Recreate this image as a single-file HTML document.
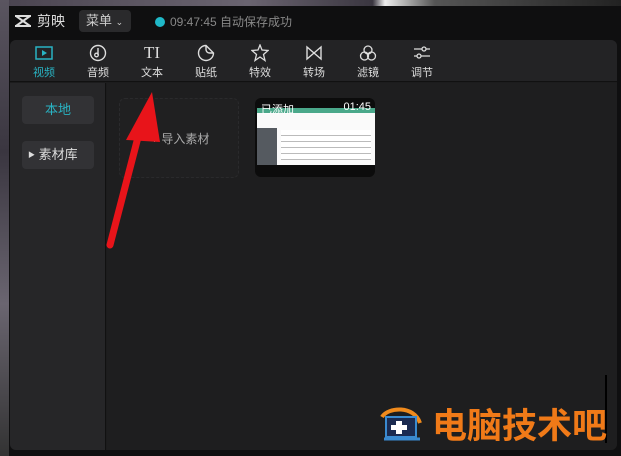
<!DOCTYPE html>
<html><head><meta charset="utf-8"><style>
*{margin:0;padding:0;box-sizing:border-box}
body{width:621px;height:456px;overflow:hidden;background:#3a3640;font-family:"Liberation Sans","Noto Sans CJK SC",sans-serif;position:relative}
.top{position:absolute;left:0;top:4px;width:621px;height:452px;background:#0f0f10}
.topbg{position:absolute;left:0;top:0;width:621px;height:6px;background:linear-gradient(90deg,#4a4450,#6a6470 40%,#3a3640 60%,#eee 62%,#555 70%,#222)}
.leftbg{position:absolute;left:0;top:0;width:9px;height:456px;background:linear-gradient(#5a5560,#3a3640,#6a6570,#333)}
.win{position:absolute;left:10px;top:40px;width:607px;height:410px;background:#1c1c1d;border-radius:6px;overflow:hidden}
.tb{position:absolute;left:0;top:0;width:607px;height:42px;background:#232325;border-bottom:1px solid #111}
.side{position:absolute;left:0;top:43px;width:96px;height:367px;background:#262628;border-right:1px solid #111}
.main{position:absolute;left:97px;top:43px;width:510px;height:367px;background:#1e1e1f}
.it{position:absolute;top:4px;width:40px;text-align:center;color:#ddd;font-size:11px}
.it svg{display:block;margin:0 auto 2px;width:18px;height:18px}
.btn{position:absolute;left:12px;width:72px;height:28px;background:#323235;border-radius:4px;font-size:13px;line-height:28px}
</style></head><body>
<div class="top"></div><div class="topbg"></div><div class="leftbg"></div>
<svg style="position:absolute;left:13px;top:13px" width="20" height="16" viewBox="0 0 20 16"><path d="M2 3h16M2 13h16M3 3l14 10M17 3L3 13" stroke="#ddd" stroke-width="2" fill="none"/></svg>
<div style="position:absolute;left:37px;top:11px;color:#ddd;font-size:14px">剪映</div>
<div style="position:absolute;left:79px;top:10px;width:52px;height:22px;background:#2a2a2c;border-radius:4px;color:#ccc;font-size:13px;line-height:22px;padding-left:7px">菜单 <span style="font-size:9px">⌄</span></div>
<div style="position:absolute;left:155px;top:17px;width:10px;height:10px;border-radius:50%;background:#1fb8c8"></div>
<div style="position:absolute;left:170px;top:13px;color:#888;font-size:12px">09:47:45 自动保存成功</div>
<div class="win">
<div class="tb">
<div class="it" style="left:14px;color:#29b3c3"><svg viewBox="0 0 18 18"><rect x="1" y="3" width="16" height="12" fill="none" stroke="#29b3c3" stroke-width="1.5"/><path d="M7 6v6l5-3z" fill="#29b3c3"/></svg>视频</div>
<div class="it" style="left:68px"><svg viewBox="0 0 18 18"><circle cx="9" cy="9" r="7.5" fill="none" stroke="#ddd" stroke-width="1.4"/><path d="M9 4v7" stroke="#ddd" stroke-width="1.4"/><circle cx="7.5" cy="11" r="1.8" fill="none" stroke="#ddd" stroke-width="1.3"/></svg>音频</div>
<div class="it" style="left:122px"><div style="font-family:'Liberation Serif',serif;font-size:17px;line-height:18px;height:20px">TI</div>文本</div>
<div class="it" style="left:176px"><svg viewBox="0 0 18 18"><path d="M9 1.5a7.5 7.5 0 1 0 7.5 7.5L9 1.5z M9 1.5v4a3.5 3.5 0 0 0 3.5 3.5h4" fill="none" stroke="#ddd" stroke-width="1.4"/></svg>贴纸</div>
<div class="it" style="left:230px"><svg viewBox="0 0 18 18"><path d="M9 1l2 5 6 .5-4.5 4 1.5 6L9 13l-5 3.5 1.5-6L1 6.5 7 6z" fill="none" stroke="#ddd" stroke-width="1.3"/></svg>特效</div>
<div class="it" style="left:284px"><svg viewBox="0 0 18 18"><path d="M2 3v12l14-12v12z" fill="none" stroke="#ddd" stroke-width="1.4"/></svg>转场</div>
<div class="it" style="left:338px"><svg viewBox="0 0 18 18"><circle cx="9" cy="6" r="4" fill="none" stroke="#ddd" stroke-width="1.3"/><circle cx="5.5" cy="12" r="4" fill="none" stroke="#ddd" stroke-width="1.3"/><circle cx="12.5" cy="12" r="4" fill="none" stroke="#ddd" stroke-width="1.3"/></svg>滤镜</div>
<div class="it" style="left:392px"><svg viewBox="0 0 18 18"><path d="M1 5h16M1 12h16" stroke="#ddd" stroke-width="1.3"/><circle cx="11" cy="5" r="2" fill="#232325" stroke="#ddd" stroke-width="1.3"/><circle cx="6" cy="12" r="2" fill="#232325" stroke="#ddd" stroke-width="1.3"/></svg>调节</div>
</div>
<div class="side">
<div class="btn" style="top:13px;color:#29b3c3;text-align:center">本地</div>
<div class="btn" style="top:58px;color:#ddd;padding-left:6px"><span style="font-size:7px;vertical-align:2px">▶</span> 素材库</div>
</div>
<div class="main">
<div style="position:absolute;left:12px;top:15px;width:120px;height:80px;border:1px dashed #2a2a2c;border-radius:6px;background:#202021"></div>
<div style="position:absolute;left:44px;top:47px;color:#aaa;font-size:12px">+ 导入素材</div>
<div style="position:absolute;left:148px;top:15px;width:120px;height:79px;background:#0c0c0c;border-radius:6px;overflow:hidden">
<div style="position:absolute;left:2px;top:13px;width:118px;height:54px;background:#fafafa"></div>
<div style="position:absolute;left:2px;top:10px;width:118px;height:5px;background:#4aa88a"></div>
<div style="position:absolute;left:2px;top:30px;width:20px;height:37px;background:#555a60"></div>
<div style="position:absolute;left:26px;top:32px;width:90px;height:30px;background:repeating-linear-gradient(#fff 0 5px,#bbb 5px 6px)"></div>
<div style="position:absolute;left:6px;top:3px;color:#fff;font-size:11px">已添加</div>
<div style="position:absolute;right:4px;top:3px;color:#fff;font-size:11px">01:45</div>
</div>
</div>
</div>
<svg style="position:absolute;left:0;top:0" width="621" height="456"><path d="M110 245L143 118" stroke="#e8141a" stroke-width="7" stroke-linecap="round"/><path d="M152 92L126 140 160 142z" fill="#e8141a"/><path d="M606 375v68" stroke="#000" stroke-width="2"/></svg>
<svg style="position:absolute;left:378px;top:405px" width="50" height="40" viewBox="0 0 50 40"><path d="M4 12C10 2 36 0 42 18" stroke="#f08a1c" stroke-width="4" fill="none"/><rect x="8" y="12" width="30" height="20" fill="#1a2a50" stroke="#3a8ad0" stroke-width="2"/><path d="M18 16h6v4h5v5h-5v4h-6v-4h-5v-5h5z" fill="#fff"/><path d="M6 34h36" stroke="#3a8ad0" stroke-width="3"/></svg>
<div style="position:absolute;left:432px;top:406px;color:#f07a18;font-size:35px;font-weight:bold;line-height:42px">电脑技术吧</div>
</body></html>
